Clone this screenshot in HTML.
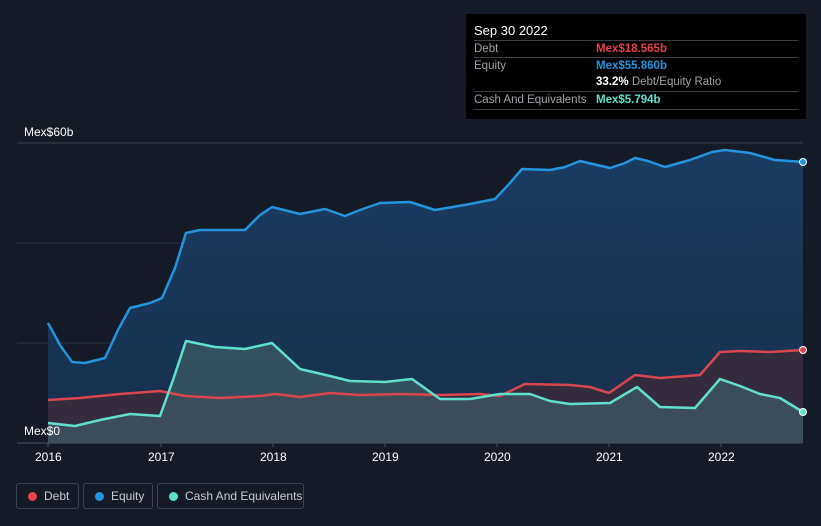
<!DOCTYPE html>
<html><head><meta charset="utf-8"><style>
body{margin:0;width:821px;height:526px;background:#151b26;font-family:"Liberation Sans",sans-serif;overflow:hidden;position:relative}
.tt{position:absolute;left:466px;top:14px;width:340px;height:105px;background:#000;color:#fff;font-size:11.5px}
.tt .h{position:absolute;left:8px;top:9px;font-size:13px}
.row{position:absolute;left:8px;width:324px;border-top:1px solid #3a3d44;height:17px;line-height:17px}
.row span.l{color:#a0a3a8}
.row span.v{position:absolute;left:122px;font-weight:bold}
.lg{position:absolute;top:483px;height:26px;border:1px solid #3a4150;border-radius:3px;color:#c8ccd2;font-size:12px;line-height:26px;box-sizing:border-box}
.lg i{position:absolute;left:11px;top:8px;width:9px;height:9px;border-radius:50%}
.lg span{position:absolute;left:27px;top:-1px}
.ax{position:absolute;color:#fff;font-size:12px}
</style></head><body>
<svg width="821" height="526" style="position:absolute;left:0;top:0">
<defs>
<linearGradient id="ge" x1="0" y1="0" x2="0" y2="1"><stop offset="0" stop-color="#1a3c62"/><stop offset="1" stop-color="#16304c"/></linearGradient>
</defs>
<line x1="17" y1="143" x2="803" y2="143" stroke="#3b404c"/>
<line x1="17" y1="243" x2="803" y2="243" stroke="#2a3442"/>
<line x1="17" y1="343" x2="803" y2="343" stroke="#2a3442"/>
<polygon fill="url(#ge)" points="48,443 48,323 60,345 72,362 85,363 105,358 118,330 130,308 150,303 162,298 175,268 186,233 200,230 225,230 245,230 260,215 272,207 300,214 325,209 345,216 360,210 380,203 410,202 435,210 470,204 495,199 510,183 522,169 550,170 565,167 580,161 610,168 625,163 635,158 648,161 665,167 690,160 712,152 725,150 750,153 775,160 803,162 803,443"/>
<polygon fill="#3a2a3a" opacity="0.85" points="48,443 48,400 80,398 120,394 160,391 185,396 220,398 260,396 275,394 300,397 330,393 360,395 400,394 440,395 480,394 500,396 525,384 570,385 590,387 609,393 635,375 660,378 700,375 720,352 740,351 770,352 803,350 803,443"/>
<polygon fill="#3d5a62" opacity="0.75" points="48,443 48,423 75,426 100,420 130,414 160,416 173,380 186,341 215,347 245,349 272,343 285,355 300,369 330,376 350,381 385,382 412,379 440,399 470,399 500,394 530,394 550,401 570,404 610,403 637,387 660,407 695,408 720,379 740,386 760,394 780,398 803,412 803,443"/>
<g fill="none" stroke-width="2.5" stroke-linejoin="round">
<polyline stroke="#2394df" points="48,323 60,345 72,362 85,363 105,358 118,330 130,308 150,303 162,298 175,268 186,233 200,230 225,230 245,230 260,215 272,207 300,214 325,209 345,216 360,210 380,203 410,202 435,210 470,204 495,199 510,183 522,169 550,170 565,167 580,161 610,168 625,163 635,158 648,161 665,167 690,160 712,152 725,150 750,153 775,160 803,162"/>
<polyline stroke="#d9464f" points="48,400 80,398 120,394 160,391 185,396 220,398 260,396 275,394 300,397 330,393 360,395 400,394 440,395 480,394 500,396 525,384 570,385 590,387 609,393 635,375 660,378 700,375 720,352 740,351 770,352 803,350"/>
<polyline stroke="#5fe0cd" points="48,423 75,426 100,420 130,414 160,416 173,380 186,341 215,347 245,349 272,343 285,355 300,369 330,376 350,381 385,382 412,379 440,399 470,399 500,394 530,394 550,401 570,404 610,403 637,387 660,407 695,408 720,379 740,386 760,394 780,398 803,412"/>
</g>
<circle cx="803" cy="162" r="3.5" fill="#2394df" stroke="#fff" stroke-width="1"/>
<circle cx="803" cy="350" r="3.5" fill="#d9464f" stroke="#fff" stroke-width="1"/>
<circle cx="803" cy="412" r="3.5" fill="#5fe0cd" stroke="#fff" stroke-width="1"/>
<line x1="17" y1="443" x2="803" y2="443" stroke="#4a505c"/>
<g stroke="#4a505c"><line x1="48" y1="443" x2="48" y2="447"/><line x1="161" y1="443" x2="161" y2="447"/><line x1="273" y1="443" x2="273" y2="447"/><line x1="385" y1="443" x2="385" y2="447"/><line x1="497" y1="443" x2="497" y2="447"/><line x1="609" y1="443" x2="609" y2="447"/><line x1="721" y1="443" x2="721" y2="447"/></g>
</svg>
<div class="ax" style="left:24px;top:125px">Mex$60b</div>
<div class="ax" style="left:24px;top:424px">Mex$0</div>
<div class="ax" style="left:35px;top:450px">2016</div>
<div class="ax" style="left:148px;top:450px">2017</div>
<div class="ax" style="left:260px;top:450px">2018</div>
<div class="ax" style="left:372px;top:450px">2019</div>
<div class="ax" style="left:484px;top:450px">2020</div>
<div class="ax" style="left:596px;top:450px">2021</div>
<div class="ax" style="left:708px;top:450px">2022</div>
<div class="tt">
<div class="h">Sep 30 2022</div>
<div class="row" style="top:26px"><span class="l">Debt</span><span class="v" style="color:#e8434b">Mex$18.565b</span></div>
<div class="row" style="top:43px"><span class="l">Equity</span><span class="v" style="color:#2394df">Mex$55.860b</span></div>
<div class="row" style="top:60px;border-top:none"><span class="v" style="color:#fff">33.2% <span style="font-weight:normal;color:#a0a3a8">Debt/Equity Ratio</span></span></div>
<div class="row" style="top:77px"><span class="l">Cash And Equivalents</span><span class="v" style="color:#5fe0cd">Mex$5.794b</span></div>
<div class="row" style="top:95px;height:0"></div>
</div>
<div class="lg" style="left:16px;width:63px"><i style="background:#e8434b"></i><span>Debt</span></div>
<div class="lg" style="left:83px;width:70px"><i style="background:#2394df"></i><span>Equity</span></div>
<div class="lg" style="left:157px;width:147px"><i style="background:#5fe0cd"></i><span>Cash And Equivalents</span></div>
</body></html>
